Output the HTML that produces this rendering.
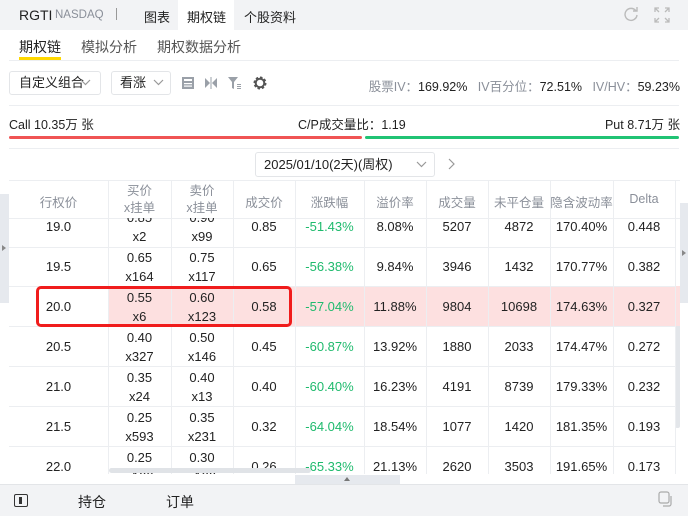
<!DOCTYPE html>
<html><head><meta charset="utf-8"><style>
*{margin:0;padding:0;box-sizing:border-box}
body{width:688px;height:516px;overflow:hidden;background:#fff;font-family:"Liberation Sans","Noto Sans CJK SC",sans-serif;color:#222;position:relative;font-size:13px}
.a{position:absolute}
.top{left:0;top:0;width:688px;height:30px;background:#f2f3f5}
.cell{position:absolute;text-align:center;font-size:13px;color:#222}
.hd{color:#8a8f99;font-size:12.5px}
.vl{position:absolute;width:1px;background:#eceef1}
.hl{position:absolute;height:1px;background:#eceef1}
.g{color:#1fba6d}
.dd{white-space:nowrap;line-height:16px}
</style></head><body>
<div class="a top"></div>
<div class="a" style="left:19px;top:7px;font-size:14px;color:#222">RGTI</div>
<div class="a" style="left:55px;top:9px;font-size:11.5px;color:#8a8f99">NASDAQ</div>
<div class="a" style="left:116px;top:8px;width:1px;height:12px;background:#999"></div>
<div class="a" style="left:144px;top:7px;font-size:13px">图表</div>
<div class="a" style="left:178px;top:0;width:56px;height:30px;background:#fff"></div>
<div class="a" style="left:187px;top:7px;font-size:13px">期权链</div>
<div class="a" style="left:244px;top:7px;font-size:13px">个股资料</div>
<svg class="a" style="left:623px;top:6px" width="16" height="16" viewBox="0 0 16 16"><path d="M13 5A6 6 0 1 0 14 9" fill="none" stroke="#bbb" stroke-width="1.4"/><path d="M10 5h4V1" fill="none" stroke="#bbb" stroke-width="1.4"/></svg>
<svg class="a" style="left:654px;top:7px" width="16" height="16" viewBox="0 0 16 16" fill="none" stroke="#bbb" stroke-width="1.3"><path d="M1 5V1h4M1 1l4 4M11 1h4v4M15 1l-4 4M1 11v4h4M1 15l4-4M15 11v4h-4M15 15l-4-4"/></svg>

<div class="a" style="left:19px;top:37px;font-size:14px;color:#222">期权链</div>
<div class="a" style="left:19px;top:57px;width:42px;height:3px;background:#ffd800"></div>
<div class="a" style="left:81px;top:37px;font-size:14px;color:#555">模拟分析</div>
<div class="a" style="left:157px;top:37px;font-size:14px;color:#555">期权数据分析</div>
<div class="hl" style="left:9px;top:60px;width:670px"></div>

<div class="a dd" style="left:9px;top:71px;width:92px;height:24px;border:1px solid #e3e5e8;border-radius:3px;font-size:13px;padding:3px 0 0 9px">自定义组合</div>
<svg class="a" style="left:80px;top:79px" width="11" height="7" viewBox="0 0 11 7"><path d="M1 1l4.5 4.5L10 1" fill="none" stroke="#999" stroke-width="1.2"/></svg>
<div class="a dd" style="left:111px;top:71px;width:60px;height:24px;border:1px solid #e3e5e8;border-radius:3px;font-size:13px;padding:3px 0 0 8px">看涨</div>
<svg class="a" style="left:153px;top:79px" width="11" height="7" viewBox="0 0 11 7"><path d="M1 1l4.5 4.5L10 1" fill="none" stroke="#999" stroke-width="1.2"/></svg>
<svg class="a" style="left:181px;top:76px" width="14" height="14" viewBox="0 0 14 14"><rect x="1" y="1" width="12" height="12" fill="#9aa0a8"/><rect x="3" y="3" width="8" height="2" fill="#fff"/><rect x="3" y="7" width="8" height="1.2" fill="#fff"/><rect x="3" y="9.5" width="8" height="1.2" fill="#fff"/></svg>
<svg class="a" style="left:204px;top:76px" width="14" height="14" viewBox="0 0 14 14" fill="#9aa0a8"><path d="M1 2l5 5-5 5z"/><path d="M13 2l-5 5 5 5z"/><rect x="6.5" y="1" width="1" height="12"/></svg>
<svg class="a" style="left:228px;top:76px" width="14" height="14" viewBox="0 0 14 14" fill="#9aa0a8"><path d="M0 1h10L6 6v7L4 12V6z"/><rect x="9" y="8" width="4" height="1"/><rect x="9" y="10" width="4" height="1"/><rect x="9" y="12" width="4" height="1"/></svg>
<svg class="a" style="left:252px;top:75px" width="16" height="16" viewBox="0 0 16 16"><circle cx="8" cy="8" r="5" fill="none" stroke="#555" stroke-width="3" stroke-dasharray="2.2 1.7"/><circle cx="8" cy="8" r="4.3" fill="none" stroke="#555" stroke-width="2"/></svg>
<div class="a" style="right:8px;top:76px;font-size:12.5px;color:#222;white-space:nowrap"><span style="color:#8a8f99">股票IV：</span>169.92%&nbsp;&nbsp;&nbsp;<span style="color:#8a8f99">IV百分位：</span>72.51%&nbsp;&nbsp;&nbsp;<span style="color:#8a8f99">IV/HV：</span>59.23%</div>
<div class="hl" style="left:9px;top:105px;width:670px"></div>

<div class="a" style="left:9px;top:114px;font-size:12.5px">Call 10.35万 张</div>
<div class="a" style="left:298px;top:114px;font-size:12.5px">C/P成交量比：1.19</div>
<div class="a" style="right:8px;top:114px;font-size:12.5px">Put 8.71万 张</div>
<div class="a" style="left:9px;top:136px;width:353px;height:3px;background:#f05454;border-radius:2px"></div>
<div class="a" style="left:365px;top:136px;width:314px;height:3px;background:#20c374;border-radius:2px"></div>
<div class="hl" style="left:9px;top:148px;width:670px"></div>

<div class="a dd" style="left:255px;top:152px;width:180px;height:25px;border:1px solid #e3e5e8;border-radius:3px;font-size:13px;padding:4px 0 0 8px">2025/01/10(2天)(周权)</div>
<svg class="a" style="left:416px;top:161px" width="11" height="7" viewBox="0 0 11 7"><path d="M1 1l4.5 4.5L10 1" fill="none" stroke="#999" stroke-width="1.2"/></svg>
<svg class="a" style="left:448px;top:158px" width="7" height="12" viewBox="0 0 7 12"><path d="M1 1l5 5-5 5" fill="none" stroke="#999" stroke-width="1.2"/></svg>

<div class="a" style="left:0;top:194px;width:9px;height:109px;background:#e6e9ee"></div>
<div class="a" style="left:2px;top:245px;width:0;height:0;border-left:4px solid #888;border-top:3px solid transparent;border-bottom:3px solid transparent"></div>
<div class="a" style="left:680px;top:203px;width:8px;height:100px;background:#e6e9ee"></div>
<div class="a" style="left:682px;top:250px;width:0;height:0;border-left:4px solid #888;border-top:3px solid transparent;border-bottom:3px solid transparent"></div>
<div class="a" style="left:675px;top:318px;width:5px;height:110px;background:#e3e6ea;border-radius:2px"></div>

<div class="hl" style="left:9px;top:180px;width:671px"></div>
<div class="hl" style="left:9px;top:218px;width:671px"></div>
<div class="cell hd" style="left:9px;top:192px;width:99px">行权价</div>
<div class="cell hd" style="left:108px;top:183px;width:63px;line-height:17px">买价<br>x挂单</div>
<div class="cell hd" style="left:171px;top:183px;width:62px;line-height:17px">卖价<br>x挂单</div>
<div class="cell hd" style="left:233px;top:192px;width:62px">成交价</div>
<div class="cell hd" style="left:295px;top:192px;width:69px">涨跌幅</div>
<div class="cell hd" style="left:364px;top:192px;width:62px">溢价率</div>
<div class="cell hd" style="left:426px;top:192px;width:62px">成交量</div>
<div class="cell hd" style="left:488px;top:192px;width:62px">未平仓量</div>
<div class="cell hd" style="left:550px;top:192px;width:63px;white-space:nowrap">隐含波动率</div>
<div class="cell hd" style="left:613px;top:192px;width:62px">Delta</div>

<div class="a" style="left:0;top:218px;width:688px;height:256px;overflow:hidden">
<div class="a" style="left:0;top:-11px;width:688px;height:300px">
<div class="a" style="left:108px;top:79px;width:572px;height:40px;background:#fde0e0"></div>
<div class="hl" style="left:9px;top:40px;width:666px"></div>
<div class="hl" style="left:9px;top:79px;width:666px"></div>
<div class="hl" style="left:9px;top:119px;width:666px"></div>
<div class="hl" style="left:9px;top:159px;width:666px"></div>
<div class="hl" style="left:9px;top:199px;width:666px"></div>
<div class="hl" style="left:9px;top:239px;width:666px"></div>
</div></div>

<div class="vl" style="left:108px;top:180px;height:294px"></div>
<div class="vl" style="left:171px;top:180px;height:294px"></div>
<div class="vl" style="left:233px;top:180px;height:294px"></div>
<div class="vl" style="left:295px;top:180px;height:294px"></div>
<div class="vl" style="left:364px;top:180px;height:294px"></div>
<div class="vl" style="left:426px;top:180px;height:294px"></div>
<div class="vl" style="left:488px;top:180px;height:294px"></div>
<div class="vl" style="left:550px;top:180px;height:294px"></div>
<div class="vl" style="left:613px;top:180px;height:294px"></div>
<div class="vl" style="left:675px;top:180px;height:294px"></div>

<div class="a" style="left:0;top:218px;width:688px;height:256px;overflow:hidden">
<div class="a" style="left:0;top:-11px;width:688px;line-height:19px">
<div class="cell" style="left:9px;top:10px;width:99px">19.0</div>
<div class="cell" style="left:108px;top:1px;width:63px">0.85<br>x2</div>
<div class="cell" style="left:171px;top:1px;width:62px">0.90<br>x99</div>
<div class="cell" style="left:233px;top:10px;width:62px">0.85</div>
<div class="cell g" style="left:295px;top:10px;width:69px">-51.43%</div>
<div class="cell" style="left:364px;top:10px;width:62px">8.08%</div>
<div class="cell" style="left:426px;top:10px;width:62px">5207</div>
<div class="cell" style="left:488px;top:10px;width:62px">4872</div>
<div class="cell" style="left:550px;top:10px;width:63px">170.40%</div>
<div class="cell" style="left:613px;top:10px;width:62px">0.448</div>
<div class="cell" style="left:9px;top:50px;width:99px">19.5</div>
<div class="cell" style="left:108px;top:41px;width:63px">0.65<br>x164</div>
<div class="cell" style="left:171px;top:41px;width:62px">0.75<br>x117</div>
<div class="cell" style="left:233px;top:50px;width:62px">0.65</div>
<div class="cell g" style="left:295px;top:50px;width:69px">-56.38%</div>
<div class="cell" style="left:364px;top:50px;width:62px">9.84%</div>
<div class="cell" style="left:426px;top:50px;width:62px">3946</div>
<div class="cell" style="left:488px;top:50px;width:62px">1432</div>
<div class="cell" style="left:550px;top:50px;width:63px">170.77%</div>
<div class="cell" style="left:613px;top:50px;width:62px">0.382</div>
<div class="cell" style="left:9px;top:90px;width:99px">20.0</div>
<div class="cell" style="left:108px;top:81px;width:63px">0.55<br>x6</div>
<div class="cell" style="left:171px;top:81px;width:62px">0.60<br>x123</div>
<div class="cell" style="left:233px;top:90px;width:62px">0.58</div>
<div class="cell g" style="left:295px;top:90px;width:69px">-57.04%</div>
<div class="cell" style="left:364px;top:90px;width:62px">11.88%</div>
<div class="cell" style="left:426px;top:90px;width:62px">9804</div>
<div class="cell" style="left:488px;top:90px;width:62px">10698</div>
<div class="cell" style="left:550px;top:90px;width:63px">174.63%</div>
<div class="cell" style="left:613px;top:90px;width:62px">0.327</div>
<div class="cell" style="left:9px;top:130px;width:99px">20.5</div>
<div class="cell" style="left:108px;top:121px;width:63px">0.40<br>x327</div>
<div class="cell" style="left:171px;top:121px;width:62px">0.50<br>x146</div>
<div class="cell" style="left:233px;top:130px;width:62px">0.45</div>
<div class="cell g" style="left:295px;top:130px;width:69px">-60.87%</div>
<div class="cell" style="left:364px;top:130px;width:62px">13.92%</div>
<div class="cell" style="left:426px;top:130px;width:62px">1880</div>
<div class="cell" style="left:488px;top:130px;width:62px">2033</div>
<div class="cell" style="left:550px;top:130px;width:63px">174.47%</div>
<div class="cell" style="left:613px;top:130px;width:62px">0.272</div>
<div class="cell" style="left:9px;top:170px;width:99px">21.0</div>
<div class="cell" style="left:108px;top:161px;width:63px">0.35<br>x24</div>
<div class="cell" style="left:171px;top:161px;width:62px">0.40<br>x13</div>
<div class="cell" style="left:233px;top:170px;width:62px">0.40</div>
<div class="cell g" style="left:295px;top:170px;width:69px">-60.40%</div>
<div class="cell" style="left:364px;top:170px;width:62px">16.23%</div>
<div class="cell" style="left:426px;top:170px;width:62px">4191</div>
<div class="cell" style="left:488px;top:170px;width:62px">8739</div>
<div class="cell" style="left:550px;top:170px;width:63px">179.33%</div>
<div class="cell" style="left:613px;top:170px;width:62px">0.232</div>
<div class="cell" style="left:9px;top:210px;width:99px">21.5</div>
<div class="cell" style="left:108px;top:201px;width:63px">0.25<br>x593</div>
<div class="cell" style="left:171px;top:201px;width:62px">0.35<br>x231</div>
<div class="cell" style="left:233px;top:210px;width:62px">0.32</div>
<div class="cell g" style="left:295px;top:210px;width:69px">-64.04%</div>
<div class="cell" style="left:364px;top:210px;width:62px">18.54%</div>
<div class="cell" style="left:426px;top:210px;width:62px">1077</div>
<div class="cell" style="left:488px;top:210px;width:62px">1420</div>
<div class="cell" style="left:550px;top:210px;width:63px">181.35%</div>
<div class="cell" style="left:613px;top:210px;width:62px">0.193</div>
<div class="cell" style="left:9px;top:250px;width:99px">22.0</div>
<div class="cell" style="left:108px;top:241px;width:63px">0.25<br>x100</div>
<div class="cell" style="left:171px;top:241px;width:62px">0.30<br>x100</div>
<div class="cell" style="left:233px;top:250px;width:62px">0.26</div>
<div class="cell g" style="left:295px;top:250px;width:69px">-65.33%</div>
<div class="cell" style="left:364px;top:250px;width:62px">21.13%</div>
<div class="cell" style="left:426px;top:250px;width:62px">2620</div>
<div class="cell" style="left:488px;top:250px;width:62px">3503</div>
<div class="cell" style="left:550px;top:250px;width:63px">191.65%</div>
<div class="cell" style="left:613px;top:250px;width:62px">0.173</div>
</div></div>

<div class="a" style="left:36px;top:286px;width:256px;height:41px;border:3px solid #f01c1c;border-radius:5px"></div>
<div class="a" style="left:109px;top:468px;width:202px;height:5px;background:#e0e3e7;border-radius:3px"></div>
<div class="a" style="left:295px;top:475px;width:105px;height:9px;background:#e6e9ee"></div>
<div class="a" style="left:344px;top:477px;width:0;height:0;border-bottom:4px solid #777;border-left:3px solid transparent;border-right:3px solid transparent"></div>

<div class="a" style="left:0;top:484px;width:688px;height:32px;background:#f2f3f5;border-top:1px solid #e3e5e8"></div>
<div class="a" style="left:14px;top:494px;width:14px;height:13px;border:1.5px solid #333;border-radius:2px"></div>
<div class="a" style="left:19px;top:497px;width:3px;height:7px;background:#333"></div>
<div class="a" style="left:78px;top:492px;font-size:14px">持仓</div>
<div class="a" style="left:166px;top:492px;font-size:14px">订单</div>
<svg class="a" style="left:658px;top:491px" width="16" height="16" viewBox="0 0 16 16" fill="none" stroke="#aaa" stroke-width="1.2"><rect x="1" y="1" width="10" height="11" rx="2"/><path d="M13 5v8a2 2 0 0 1-2 2H5"/></svg>
</body></html>
